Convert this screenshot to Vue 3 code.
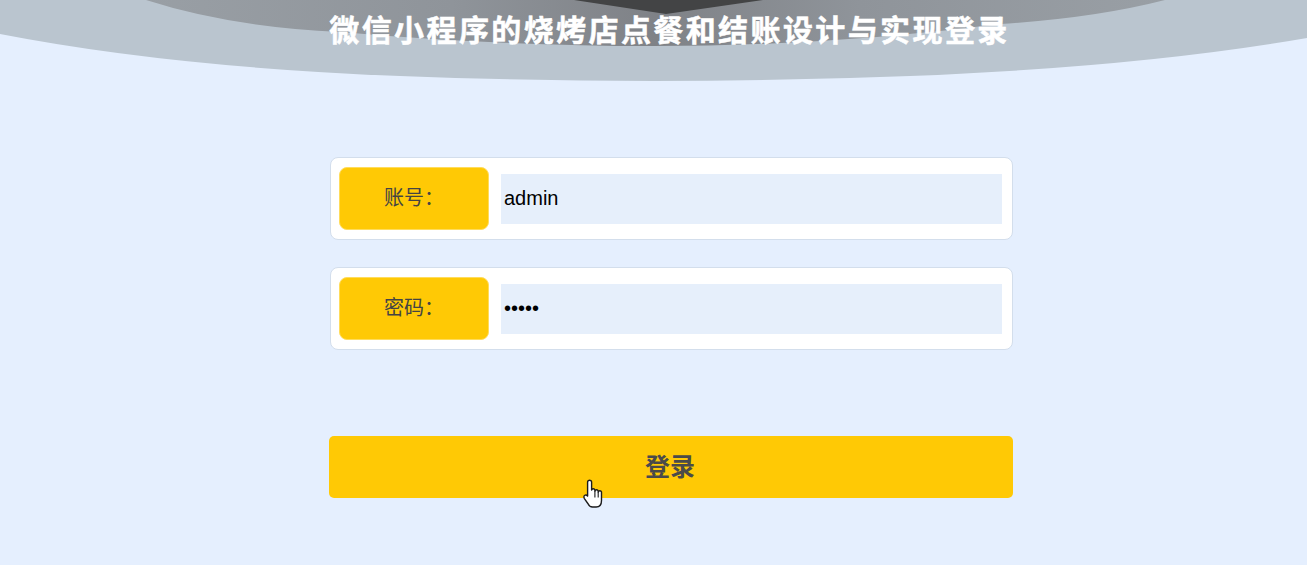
<template>
  <div class="page">
    <!-- top arcs -->
    <svg class="arcs" width="1307" height="90" viewBox="0 0 1307 90" aria-hidden="true">
      <defs>
        <linearGradient id="midArc" x1="0" y1="0" x2="1" y2="0">
          <stop offset="0" stop-color="#999fa5" />
          <stop offset="0.3" stop-color="#8f949a" />
          <stop offset="0.5" stop-color="#7f8287" />
          <stop offset="0.7" stop-color="#8f949a" />
          <stop offset="1" stop-color="#999fa5" />
        </linearGradient>
      </defs>
      <path d="M0 34 Q170 67 400 76 Q530 81 653 81 Q780 81 910 76 Q1140 67 1307 38 V0 H0 Z" fill="#bac5cf" />
      <path d="M146 0 Q230 27 340 32 Q500 46 653 46 Q830 46 1000 24 Q1095 18 1165 0 Z" fill="url(#midArc)" />
      <path d="M574 0 L666 14 L763 0 Z" fill="#434445" />
    </svg>

    <h1 class="title">{{ title }}</h1>

    <form class="login-form" @submit.prevent>
      <div v-for="field in fields" :key="field.label" class="form-row">
        <label class="form-label">{{ field.label }}</label>
        <input v-model="field.value" class="form-input" :type="field.type" />
      </div>
      <button class="login-btn" type="submit">登录</button>
    </form>

    <!-- mouse pointer from the recording -->
    <svg class="hand" width="22" height="32" viewBox="0 0 22 32" aria-hidden="true">
      <path
        d="M4.6 4.2a2 2 0 0 1 4 0V12a1.7 1.7 0 0 1 3.3 0v1a1.7 1.7 0 0 1 3.3 0v1a1.7 1.7 0 0 1 3.3 0v8.5q0 6.5-5.4 6.5H9.5q-3 0-4.3-3L1.4 20.6q-1.3-2.6.8-3.5 1.5-.5 2.4 1Z"
        fill="#fff"
        stroke="#1c1c1c"
        stroke-width="1.4"
        stroke-linejoin="round"
      />
      <path d="M11.9 13v6.5M15.2 14v5.5" fill="none" stroke="#1c1c1c" stroke-width="1.1" />
    </svg>
  </div>
</template>

<script setup>
import { reactive } from 'vue'

const title = '微信小程序的烧烤店点餐和结账设计与实现登录'

const fields = reactive([
  { label: '账号：', value: 'admin', type: 'text' },
  { label: '密码：', value: 'admin', type: 'password' }
])
</script>

<style scoped>
.page {
  position: relative;
  height: 565px;
  overflow: hidden;
  background: #e5effe;
  font-family: "Liberation Sans", "Noto Sans CJK SC", sans-serif;
}

.arcs {
  position: absolute;
  top: 0;
  left: 0;
}

.title {
  position: relative;
  margin: 0;
  padding-top: 13px;
  padding-left: 32px;
  height: 49px;
  box-sizing: border-box;
  line-height: 36px;
  font-size: 30px;
  font-weight: 700;
  letter-spacing: 2.4px;
  color: #fff;
  text-align: center;
  -webkit-text-stroke: 0.5px #fff;
  white-space: nowrap;
}

.login-form {
  position: relative;
  width: 684px;
  margin: 108px 0 0 329px;
}

.form-row {
  display: flex;
  align-items: center;
  height: 83px;
  margin: 0 0 27px 1px;
  padding: 0 10px 0 8px;
  box-sizing: border-box;
  background: #fff;
  border: 1px solid #d3deec;
  border-radius: 8px;
}

.form-label {
  width: 150px;
  height: 63px;
  flex: none;
  box-sizing: border-box;
  border: 1px solid #ffdc5c;
  border-radius: 8px;
  background: #ffc905;
  color: #444;
  font-size: 20px;
  line-height: 61px;
  text-align: center;
}

.form-input {
  flex: 1;
  min-width: 0;
  height: 50px;
  margin-left: 12px;
  padding: 0 3px;
  box-sizing: border-box;
  border: none;
  outline: none;
  background: #e6effb;
  color: #000;
  font-family: inherit;
  font-size: 20px;
}

.login-btn {
  display: block;
  width: 100%;
  height: 62px;
  margin-top: 86px;
  padding: 0 2px 4px 0;
  border: none;
  border-radius: 5px;
  background: #ffc905;
  color: #4a4a4a;
  font-family: inherit;
  font-size: 25px;
  font-weight: 700;
  cursor: pointer;
}

.hand {
  position: absolute;
  left: 583px;
  top: 478px;
}
</style>
